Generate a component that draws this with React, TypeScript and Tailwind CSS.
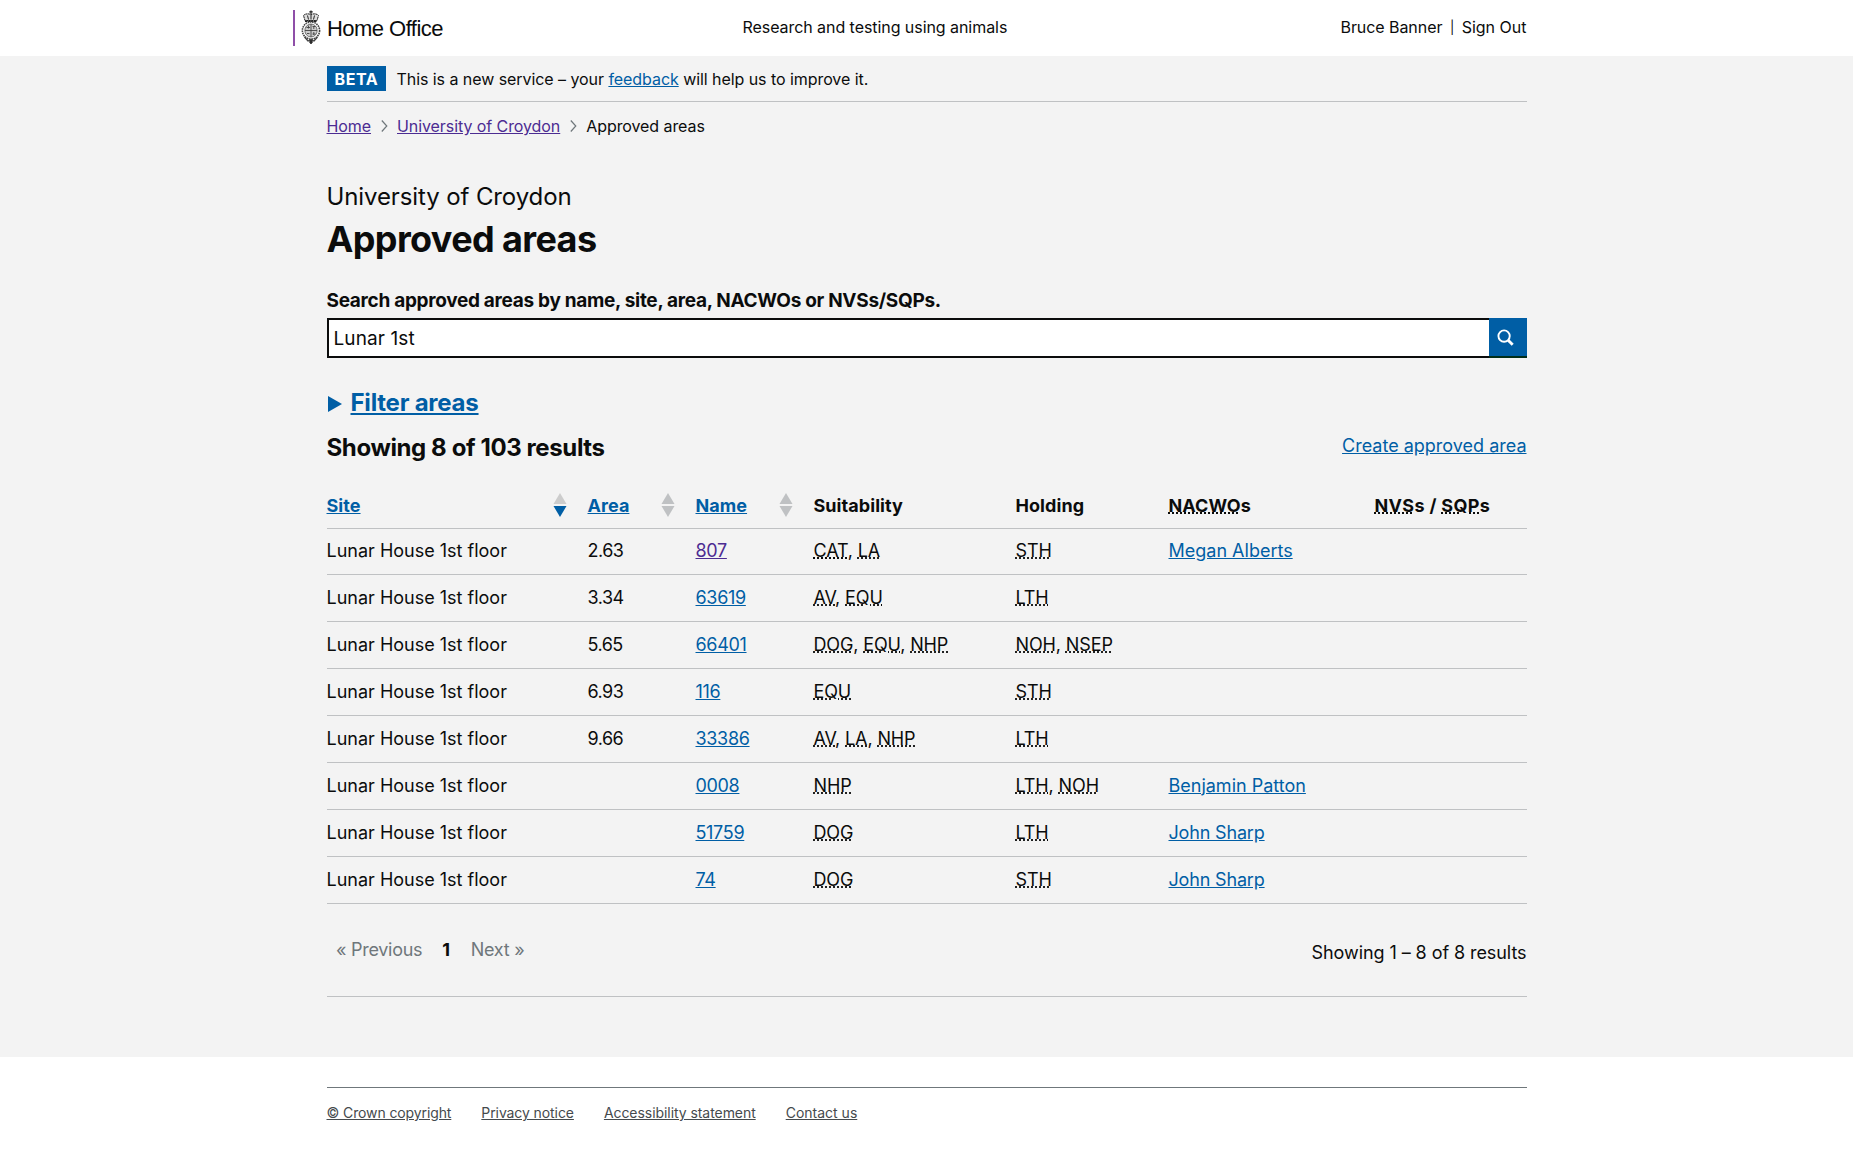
import type { ReactNode } from 'react';

const link = 'text-[#005ea5] underline';
const visited = 'text-[#4c2c92] underline';

function Crest() {
  return (
    <svg width="20" height="36" viewBox="0 0 20 36" fill="none" stroke="#222">
      <path d="M10 0.500v4M8.300 1.800h3.400" strokeWidth="1.200" />
      <path d="M4 10.500L2.500 5.500c1.500-2 5-2 7.500-1c2.500-1 6-1 7.500 1L16 10.500z" fill="#ddd" strokeWidth="1" strokeDasharray="2 0.500" />
      <path d="M10 4.500v5M6.500 5.500l1 4M13.500 5.500l-1 4" strokeWidth="1" />
      <path d="M4 11.300h12" strokeWidth="1.500" strokeDasharray="2.500 0.500" />
      <ellipse cx="10" cy="20.500" rx="8.600" ry="8.600" stroke="#444" strokeWidth="1.600" strokeDasharray="1.600 0.700" />
      <ellipse cx="10" cy="20.500" rx="6.200" ry="6.500" fill="#ccc" stroke="#555" strokeWidth="0.800" />
      <path d="M10 14v13M4 20.500h12M5.500 17.500h3.500M11.500 16.500h3M6 23.500h2.500M11.500 24h3" stroke="#444" strokeWidth="0.900" />
      <path d="M7.500 15.500v3M12.800 22v3M12.800 16v3" stroke="#444" strokeWidth="0.900" />
      <path d="M3.500 27l3.500 4L10 30l3 1l3.500-4" stroke="#444" strokeWidth="1.300" />
      <path d="M10 29.500v4.500M8.200 32h3.600" strokeWidth="1.600" />
    </svg>
  );
}

function Chevron() {
  return (
    <svg className="ml-[10px] mr-[9px]" width="7" height="12" viewBox="0 0 7 12" fill="none" stroke="#6f777b" strokeWidth="1.200">
      <path d="M0.800 0.500l5 5.500l-5 5.500" />
    </svg>
  );
}

function Sort({ active = false }: { active?: boolean }) {
  return (
    <svg width="14" height="24" viewBox="0 0 14 24">
      <path d="M7 0l6.500 11h-13z" fill={active ? '#cccccc' : '#bfc1c3'} />
      <path d="M7 24l6.500-11h-13z" fill={active ? '#005ea5' : '#bfc1c3'} />
    </svg>
  );
}

function Abbr({ children }: { children: ReactNode }) {
  return <abbr className="underline decoration-dotted">{children}</abbr>;
}

function Codes({ items }: { items: string[] }) {
  return (
    <>
      {items.map((c, i) => (
        <span key={c}>
          {i > 0 && ', '}
          <Abbr>{c}</Abbr>
        </span>
      ))}
    </>
  );
}

const cols = 'grid grid-cols-[261px_108px_118px_202px_153px_206px_152px] border-b border-[#bfc1c3]';

const rows: { area: string; name: string; s: string[]; h: string[]; n: string }[] = [
  { area: '2.63', name: '807', s: ['CAT', 'LA'], h: ['STH'], n: 'Megan Alberts' },
  { area: '3.34', name: '63619', s: ['AV', 'EQU'], h: ['LTH'], n: '' },
  { area: '5.65', name: '66401', s: ['DOG', 'EQU', 'NHP'], h: ['NOH', 'NSEP'], n: '' },
  { area: '6.93', name: '116', s: ['EQU'], h: ['STH'], n: '' },
  { area: '9.66', name: '33386', s: ['AV', 'LA', 'NHP'], h: ['LTH'], n: '' },
  { area: '', name: '0008', s: ['NHP'], h: ['LTH', 'NOH'], n: 'Benjamin Patton' },
  { area: '', name: '51759', s: ['DOG'], h: ['LTH'], n: 'John Sharp' },
  { area: '', name: '74', s: ['DOG'], h: ['STH'], n: 'John Sharp' },
];

export default function App() {
  return (
    <div className="min-h-[1153px] bg-white font-['Inter',sans-serif] text-[#0b0c0c]">
      <header className="mx-auto grid h-14 w-[1200px] grid-cols-[416px_1fr_auto] items-center text-base tracking-[-0.060px]">
        <div className="-ml-[33.500px] flex h-9 items-center border-l-2 border-[#8f4fa8]">
          <span className="ml-[6px]"><Crest /></span>
          <span className="ml-[6px] pt-px font-['Liberation_Sans',sans-serif] text-[22px] leading-9 tracking-[-0.540px]">Home Office</span>
        </div>
        <div className="pb-[2px] leading-5">Research and testing using animals</div>
        <div className="flex pb-[2px] leading-5">Bruce Banner<span className="ml-[7.500px] mr-[7.500px] text-[13px]">|</span><span className="tracking-normal">Sign Out</span></div>
      </header>

      <main className="h-[1001px] bg-[#f3f3f3]">
        <div className="mx-auto w-[1200px]">
          <div className="flex h-[46px] items-center border-b border-[#bfc1c3] text-base">
            <span className="h-[25px] w-[59.500px] bg-[#005ea5] pl-2 font-bold leading-[26px] tracking-[0.600px] text-white">BETA</span>
            <span className="ml-[10.500px] tracking-[-0.060px]">This is a new service – your <a className={link}>feedback</a> will help us to improve it.</span>
          </div>
          <nav className="mt-[14px] flex h-5 items-center text-base leading-5 tracking-[-0.080px]">
            <a className={visited}>Home</a>
            <Chevron />
            <a className={visited}>University of Croydon</a>
            <Chevron />
            <span>Approved areas</span>
          </nav>
          <p className="mt-[46px] text-2xl leading-[30px] tracking-[-0.110px]">University of Croydon</p>
          <h1 className="mt-[7px] text-4xl font-bold leading-[40px] tracking-[-0.620px]">Approved areas</h1>
          <label className="mt-[29px] block text-[19px] font-bold leading-[25px] tracking-[-0.300px]">Search approved areas by name, site, area, NACWOs or NVSs/SQPs.</label>
          <div className="mt-[5px] flex h-10">
            <div className="flex-1 border-2 border-r-0 border-[#0b0c0c] bg-white pl-[5px] pt-px text-[19px] leading-[35px] tracking-[0.100px]">Lunar 1st</div>
            <button className="flex w-[38px] items-center justify-center border-b-2 border-[#002d18] bg-[#005ea5] pr-[4px]">
              <svg width="17" height="17" viewBox="0 0 18 18" fill="none" stroke="white">
                <circle cx="7.500" cy="7.500" r="6" strokeWidth="2" />
                <path d="M11.800 11.800l4.800 4.800" strokeWidth="3" />
              </svg>
            </button>
          </div>
          <div className="mt-[30px] flex h-[30px] items-center">
            <svg className="ml-[1.500px] mt-[2px]" width="14" height="16" viewBox="0 0 14 16"><path d="M0 0l14 8l-14 8z" fill="#005ea5" /></svg>
            <h3 className={`ml-[8.500px] text-2xl font-bold leading-[30px] tracking-[-0.230px] ${link}`}>Filter areas</h3>
          </div>
          <div className="mt-[15px] flex h-[30px] justify-between">
            <h3 className="text-2xl font-bold leading-[30px] tracking-[-0.390px]">Showing 8 of 103 results</h3>
            <a className={`text-lg leading-[25px] ${link}`}>Create approved area</a>
          </div>

          <div className="mt-[20px] text-lg leading-[25px]">
            <div className={`${cols} h-[46px] items-center pb-px font-bold tracking-[0.060px]`}>
              <span className="flex items-center justify-between pr-[20.500px]"><a className={link}>Site</a><Sort active /></span>
              <span className="flex items-center justify-between pr-[21px]"><a className={link}>Area</a><Sort /></span>
              <span className="flex items-center justify-between pr-[21px]"><a className={link}>Name</a><Sort /></span>
              <span>Suitability</span>
              <span>Holding</span>
              <span><Abbr>NACWO</Abbr>s</span>
              <span className="tracking-[0.320px]"><Abbr>NVS</Abbr>s / <Abbr>SQP</Abbr>s</span>
            </div>
            {rows.map((r, i) => (
              <div key={r.name} className={`${cols} items-center pb-[2px] ${i === 0 ? 'h-[46px]' : 'h-[47px]'}`}>
                <span>Lunar House 1st floor</span>
                <span className="tracking-[-0.500px]">{r.area}</span>
                <span className="tracking-[-0.320px]"><a className={i === 0 ? visited : link}>{r.name}</a></span>
                <span className="tracking-[-0.140px]"><Codes items={r.s} /></span>
                <span className="tracking-[-0.120px]"><Codes items={r.h} /></span>
                <span className={r.n === 'John Sharp' ? 'tracking-[-0.170px]' : ''}><a className={link}>{r.n}</a></span>
                <span />
              </div>
            ))}
          </div>

          <div className="flex h-[93px] justify-between border-b border-[#bfc1c3] text-lg leading-[25px]">
            <div className="flex pl-[9.500px] pt-[33px] tracking-[-0.280px] text-[#6f777b]">
              <span>« Previous</span>
              <span className="ml-5 mr-[21px] font-bold text-[#0b0c0c]">1</span>
              <span>Next »</span>
            </div>
            <span className="pt-[36px] tracking-[-0.070px]">Showing 1 – 8 of 8 results</span>
          </div>
        </div>
      </main>

      <footer className="mx-auto w-[1200px] pt-[30px]">
        <div className="flex gap-[30px] border-t border-[#6f777b] pt-[15px] text-sm leading-5 tracking-[-0.090px] text-[#454a4d]">
          <a className="underline tracking-[-0.110px]">© Crown copyright</a>
          <a className="underline">Privacy notice</a>
          <a className="underline tracking-[-0.060px]">Accessibility statement</a>
          <a className="underline tracking-normal">Contact us</a>
        </div>
      </footer>
    </div>
  );
}
